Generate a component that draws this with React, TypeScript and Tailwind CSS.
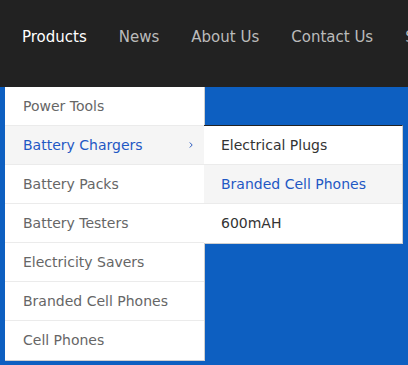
const mainItems = [
  'Power Tools',
  'Battery Chargers',
  'Battery Packs',
  'Battery Testers',
  'Electricity Savers',
  'Branded Cell Phones',
  'Cell Phones',
]

const subItems = ['Electrical Plugs', 'Branded Cell Phones', '600mAH']

const navItems = ['Products', 'News', 'About Us', 'Contact Us', 'Support']

export default function App() {
  return (
    <div
      className="relative w-[408px] h-[365px] overflow-hidden bg-[#0d5fc1]"
      style={{ fontFamily: "Tahoma, 'DejaVu Sans', sans-serif" }}
    >
      {/* top nav */}
      <div className="h-[87px] bg-[#222222] flex items-center pl-[6px] pb-[13px] whitespace-nowrap">
        {navItems.map((item, i) => (
          <span
            key={item}
            className={`px-4 text-[15px] ${i === 0 ? 'text-white' : 'text-[#bbbbbb]'}`}
          >
            {item}
          </span>
        ))}
      </div>

      {/* dropdown */}
      <div className="absolute left-[5px] top-[87px] w-[200px] bg-white border-r border-b border-[#cfcfcf]">
        {mainItems.map((item, i) => (
          <div
            key={item}
            className={`relative h-[39px] flex items-center pl-[18px] text-[14px] border-b border-[#ebebeb] last:border-b-0 ${
              i === 1 ? 'bg-[#f5f5f5] text-[#1f58c4]' : 'text-[#666666]'
            }`}
          >
            {item}
            {i === 1 && (
              <svg className="absolute left-[184px] top-[16px]" width="4" height="6" viewBox="0 0 4 6">
                <path d="M0.8 0.5 L3.2 3 L0.8 5.5" fill="none" stroke="#2c5bbf" strokeWidth="1" />
              </svg>
            )}
            {i === 1 && (
              <div className="absolute left-full top-[-1px] w-[199px] bg-white border-t border-t-[#222222] border-r border-b border-[#cfcfcf]">
                {subItems.map((sub, j) => (
                  <div
                    key={sub}
                    className={`h-[39px] flex items-center pl-[17px] text-[14px] border-b border-[#ebebeb] last:border-b-0 ${
                      j === 1 ? 'bg-[#f5f5f5] text-[#1f58c4]' : 'text-[#333333]'
                    }`}
                  >
                    {sub}
                  </div>
                ))}
              </div>
            )}
          </div>
        ))}
      </div>
    </div>
  )
}
